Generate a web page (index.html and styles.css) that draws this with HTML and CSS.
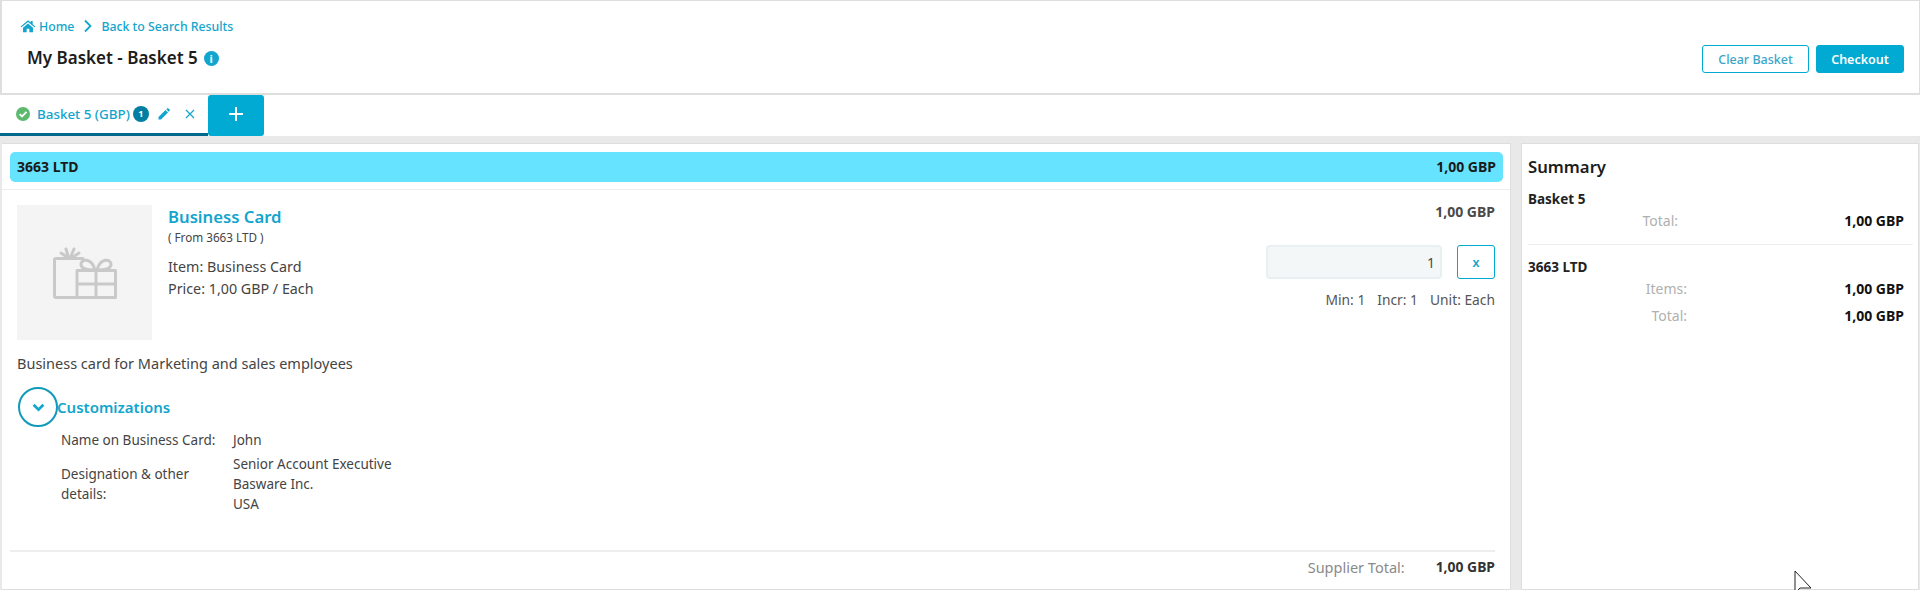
FILE: index.html
```html
<!DOCTYPE html>
<html lang="en">
<head>
<meta charset="utf-8">
<title>My Basket</title>
<link rel="stylesheet" href="styles.css">
</head>
<body>
<header class="page-header">
  <div class="header-left">
    <nav class="crumbs">
      <svg class="home-icon" viewBox="0 0 24 20"><path d="M12 1.500 1 10.600l1.200 1.400L12 4l9.800 8 1.200-1.400-4-3.300V2.500h-3v2.300zM4.500 12.500V19.500h5.500v-5.500h4v5.500h5.500V12.500L12 6.300z"/></svg>
      <a class="crumb">Home</a>
      <svg class="crumb-sep" viewBox="0 0 10 14"><path d="M2 1.500 7.500 7 2 12.500"/></svg>
      <a class="crumb">Back to Search Results</a>
    </nav>
    <h1 class="page-title">My Basket - Basket 5 <span class="info-dot">i</span></h1>
  </div>
  <div class="header-actions">
    <button class="btn btn-outline">Clear Basket</button>
    <button class="btn btn-solid">Checkout</button>
  </div>
</header>
<div class="tabs">
  <div class="tab">
    <svg class="tab-check" viewBox="0 0 14 14"><circle cx="7" cy="7" r="7"/><path d="M3.600 7.200 6 9.500l4.500-4.600"/></svg>
    <span class="tab-label">Basket 5 (GBP)</span>
    <span class="tab-count">1</span>
    <svg class="tab-edit" viewBox="0 0 12 12"><path d="M0.500 11.500V9L7.500 2l2.500 2.500-7 7zM8.300 1.200 9.200.4a1 1 0 0 1 1.300 0l1.100 1.100a1 1 0 0 1 0 1.300l-.9.900z"/></svg>
    <svg class="tab-close" viewBox="0 0 10 10"><path d="M1 1l8 8M9 1l-8 8"/></svg>
  </div>
  <button class="tab-add"><svg viewBox="0 0 16 16"><path d="M8 1v14M1 8h14"/></svg></button>
</div>
<div class="content">
  <main class="basket">
    <div class="supplier-bar"><span>3663 LTD</span><span>1,00 GBP</span></div>
    <section class="item">
      <div class="item-top">
        <div class="item-thumb">
          <svg viewBox="0 0 64 52"><g fill="none" stroke="#c9c9c9" stroke-width="3" stroke-linejoin="round" stroke-linecap="round"><path d="M30 11.500H3a1.500 1.500 0 0 0-1.500 1.500v36A1.500 1.500 0 0 0 3 50.500h21"/><path d="M24 23.500h38.500v27H24zM24 37h38.500M43 23.500v27"/><path d="M42 23c-6 0-14-1-14-5.500 0-6.500 11-6.500 14 5.500"/><path d="M44 23c6 0 14-1 14-5.500 0-6.500-11-6.500-14 5.500"/><path d="M14 10 8 6M15 9l-2-7M18 9l3-7M20 10l6-4"/></g></svg>
        </div>
        <div class="item-info">
          <a class="item-name">Business Card</a>
          <div class="item-from">( From 3663 LTD )</div>
          <div class="item-line">Item: Business Card</div>
          <div class="item-line">Price: 1,00 GBP / Each</div>
        </div>
        <div class="item-side">
          <div class="item-price">1,00 GBP</div>
          <div class="qty-row">
            <input class="qty-input" value="1" aria-label="Quantity">
            <button class="qty-remove">x</button>
          </div>
          <div class="qty-meta"><span>Min: 1</span><span>Incr: 1</span><span>Unit: Each</span></div>
        </div>
      </div>
      <p class="item-desc">Business card for Marketing and sales employees</p>
      <div class="custom-head">
        <span class="chev-ring"><svg viewBox="0 0 12 8"><path d="M1.500 1.500 6 6l4.500-4.500"/></svg></span>
        <span class="custom-title">Customizations</span>
      </div>
      <div class="custom-grid">
        <div class="c-label c-first">Name on Business Card:</div>
        <div class="c-value c-first">John</div>
        <div class="c-label c-second">Designation &amp; other details:</div>
        <div class="c-value">Senior Account Executive<br>Basware Inc.<br>USA</div>
      </div>
    </section>
    <footer class="supplier-total"><span class="st-label">Supplier Total:</span><span class="st-value">1,00 GBP</span></footer>
  </main>
  <aside class="summary">
    <h2 class="summary-title">Summary</h2>
    <h3 class="sum-head">Basket 5</h3>
    <div class="sum-row sum-row-top"><span class="sum-label sum-a">Total:</span><span class="sum-value">1,00 GBP</span></div>
    <hr class="sum-rule">
    <h3 class="sum-head">3663 LTD</h3>
    <div class="sum-row sum-row-top"><span class="sum-label">Items:</span><span class="sum-value">1,00 GBP</span></div>
    <div class="sum-row sum-row-b"><span class="sum-label">Total:</span><span class="sum-value">1,00 GBP</span></div>
    <svg class="cursor" viewBox="0 0 18 24"><path d="M1 1v22l5-5h11z" /></svg>
  </aside>
</div>
</body>
</html>
```

FILE: styles.css
```css
* { box-sizing: border-box; }
html, body { margin: 0; height: 590px; overflow: hidden; }
body { font-family: "Noto Sans", "Open Sans", sans-serif; color: #3d3d3d; background: #fff; font-size: 14px; }
h1, h2, h3, p { margin: 0; }
button, input { font-family: inherit; }

.page-header { height: 95px; border: 2px solid #dedede; border-top-width: 1px; border-right-width: 1px; display: flex; justify-content: space-between; padding: 0 15px 0 18px; }
.header-left { display: flex; flex-direction: column; }
.crumbs { display: flex; align-items: center; height: 24px; margin-top: 13px; color: #12a5cd; font-size: 12.300px; font-weight: 500; }
.home-icon { width: 16px; height: 14px; fill: #12a5cd; margin-right: 3px; }
.crumb-sep { width: 10px; height: 14px; fill: none; stroke: #12a5cd; stroke-width: 1.800; margin: 0 8px 0 9px; }
.page-title { margin: 8px 0 0 7px; font-size: 17px; font-weight: 600; color: #1c1c1c; display: flex; align-items: center; gap: 6px; line-height: 24px; }
.info-dot { width: 15px; height: 15px; border-radius: 50%; background: #12a5cd; color: #fff; font-size: 11px; font-weight: 700; line-height: 15px; text-align: center; }
.header-actions { display: flex; gap: 7px; margin-top: 44px; height: 28px; }
.btn { height: 28px; border-radius: 3px; font-size: 12.500px; font-weight: 500; padding: 0; }
.btn-outline { width: 107px; background: #fff; border: 1px solid #00aad2; color: #3ba6c9; }
.btn-solid { width: 88px; background: #00aad2; border: 1px solid #00aad2; color: #fff; font-weight: 600; }

.tabs { height: 41px; display: flex; background: #fff; }
.tab { width: 208px; height: 41px; border-bottom: 3px solid #00688a; display: flex; align-items: center; padding: 0 0 1px 16px; }
.tab-check { width: 14px; height: 14px; margin-right: 7px; }
.tab-check circle { fill: #5cb96d; }
.tab-check path { fill: none; stroke: #fff; stroke-width: 1.800; }
.tab-label { color: #12a5cd; font-size: 13.400px; font-weight: 500; }
.tab-count { width: 16px; height: 16px; border-radius: 50%; background: #007fa3; color: #fff; font-size: 9px; font-weight: 700; line-height: 16px; text-align: center; margin-left: 3px; }
.tab-edit { width: 12px; height: 12px; fill: #12a5cd; margin-left: 9px; }
.tab-close { width: 10px; height: 10px; fill: none; stroke: #12a5cd; stroke-width: 1.200; margin-left: 15px; }
.tab-add { width: 56px; height: 41px; border: 0; padding: 0; border-radius: 3px; background: #00aad2; display: flex; align-items: center; justify-content: center; }
.tab-add svg { width: 16px; height: 16px; fill: none; stroke: #fff; stroke-width: 2; margin-bottom: 3px; }

.content { height: 454px; background: #e9e9e9; display: flex; gap: 10px; padding: 7px 1px 0 2px; }
.basket { width: 1509px; background: #fff; border: 1px solid #dedede; border-left: 0; display: flex; flex-direction: column; position: relative; }
.summary { flex: 1; background: #fff; border: 1px solid #dedede; padding: 11px 5px 0 6px; position: relative; }

.supplier-bar { height: 30px; margin: 8px 7px 0 8px; background: #66e3ff; border-radius: 5px; display: flex; justify-content: space-between; align-items: center; padding: 0 7px 2px; font-size: 14px; font-weight: 700; color: #1a1a1a; }
.item { flex: 1; margin-top: 7px; border-top: 1px solid #eeeeee; padding: 15px 15px 0 15px; }
.item-top { display: flex; }
.item-thumb { width: 135px; height: 135px; background: #f4f4f4; display: flex; align-items: center; justify-content: center; }
.item-thumb svg { width: 64px; height: 52px; }
.item-info { margin-left: 16px; flex: 1; }
.item-name { display: block; color: #12a5cd; font-size: 16.700px; font-weight: 600; line-height: 24px; }
.item-from { font-size: 11.700px; line-height: 16px; color: #444; margin-bottom: 11px; }
.item-line { font-size: 14.300px; line-height: 22px; color: #444; }
.item-side { width: 232px; display: flex; flex-direction: column; align-items: flex-end; }
.item-price { font-size: 14px; font-weight: 700; color: #4a4a4a; line-height: 18px; margin-top: -2px; }
.qty-row { display: flex; gap: 15px; margin-top: 24px; }
.qty-input { width: 176px; height: 34px; background: #f3f7f8; border: 2px solid #e9f0f2; border-radius: 4px; text-align: right; padding: 0 5px; font-size: 14px; color: #4a4a4a; }
.qty-remove { width: 38px; height: 34px; background: #fff; border: 1px solid #00aad2; border-radius: 3px; color: #12a5cd; font-size: 12.500px; font-weight: 600; padding: 0; }
.qty-meta { display: flex; gap: 12px; margin-top: 12px; font-size: 13.800px; line-height: 18px; color: #555; }
.item-desc { margin-top: 13px; font-size: 14.500px; line-height: 20px; color: #444; }
.custom-head { display: flex; align-items: center; margin-top: 14px; height: 40px; }
.chev-ring { width: 40px; height: 40px; border: 2px solid #109ab9; border-radius: 50%; display: flex; align-items: center; justify-content: center; flex: none; margin-left: 1px; }
.chev-ring svg { width: 13px; height: 9px; fill: none; stroke: #12a5cd; stroke-width: 2.500; }
.custom-title { color: #12a5cd; font-size: 15px; font-weight: 600; margin-left: -1px; }
.custom-grid { display: grid; grid-template-columns: 172px 1fr; margin: 3px 0 0 44px; font-size: 13.500px; line-height: 20px; color: #444; }
.c-first { margin-bottom: 4px; }
.c-label { width: 155px; }
.c-second { margin-top: 10px; }

.supplier-total { height: 39px; margin: 0 15px 0 8px; border-top: 2px solid #eeeeee; display: flex; justify-content: flex-end; align-items: center; padding-bottom: 8px; font-size: 14.500px; }
.st-label { color: #8a8a8a; margin-right: 31px; }
.st-value { font-size: 13.900px; font-weight: 700; color: #333; }

.summary-title { font-size: 16.700px; font-weight: 600; color: #1c1c1c; line-height: 24px; margin-bottom: 10px; }
.sum-head { font-size: 13.500px; font-weight: 700; color: #222; line-height: 20px; }
.sum-row { display: grid; grid-template-columns: 159px 1fr; margin-top: 7px; line-height: 20px; font-size: 14px; padding-right: 9px; }
.sum-row-top { margin-top: 2px; }
.sum-row-b { margin-top: 7px; }
.sum-label { text-align: right; color: #b0b0b0; }
.sum-a { padding-right: 9px; }
.sum-value { text-align: right; font-weight: 700; color: #111; }
.sum-rule { border: 0; border-top: 1px solid #eeeeee; margin: 13px 0 12px; }
.cursor { position: absolute; left: 272px; bottom: -5px; width: 18px; height: 24px; fill: #fff; stroke: #222; stroke-width: 1; }
```
